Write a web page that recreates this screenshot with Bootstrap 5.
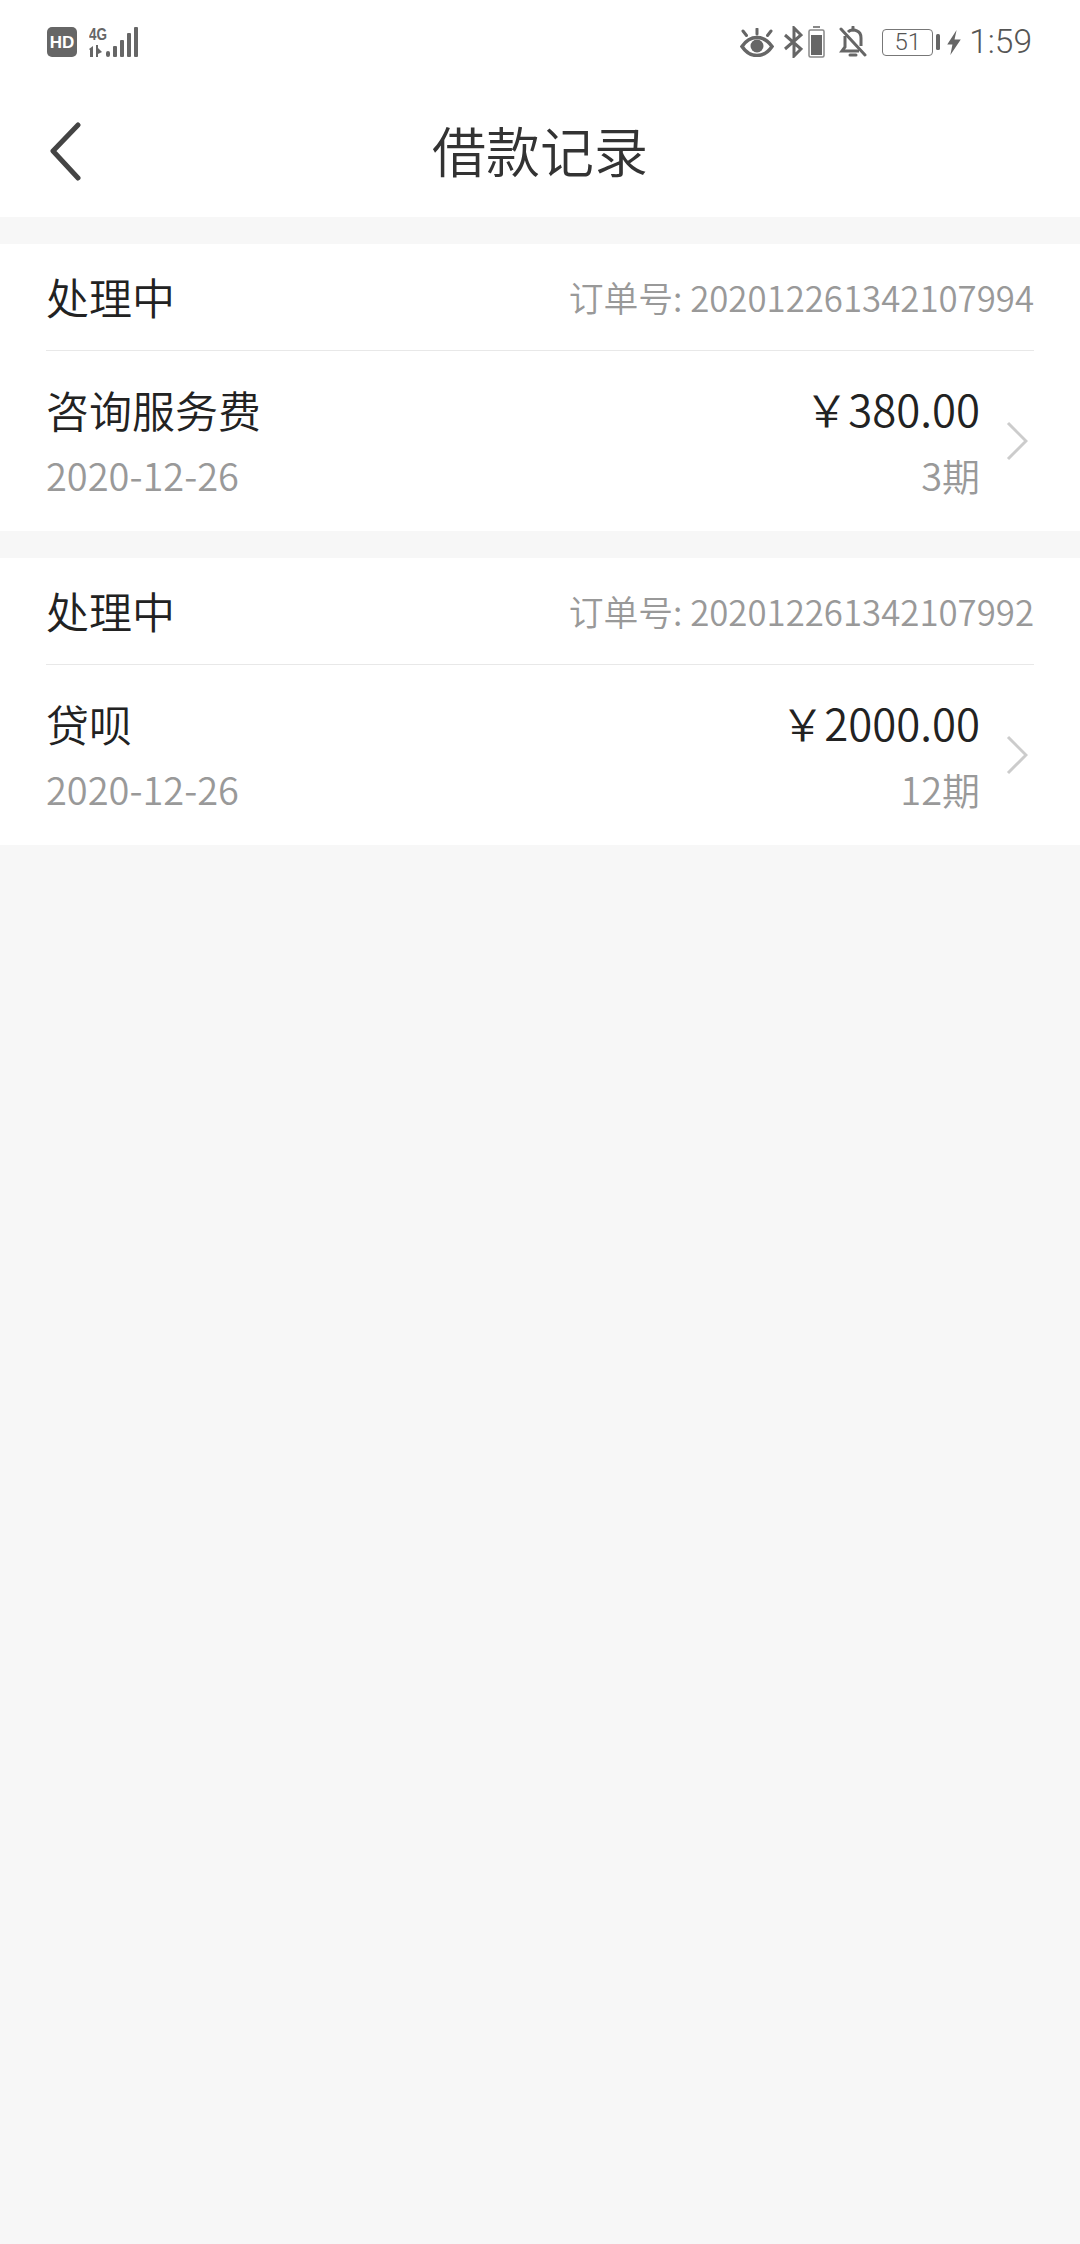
<!DOCTYPE html>
<html lang="zh-CN">
<head>
    <meta charset="UTF-8">
    <meta name="viewport" content="width=device-width, initial-scale=1.0">
    <title>借款记录</title>
    <link rel="stylesheet" href="https://cdn.jsdelivr.net/npm/bootstrap@5.3.0/dist/css/bootstrap.min.css">
    <style>
        body { background: #f7f7f7; font-family: "Noto Sans CJK SC", "Noto Sans", sans-serif; min-height: 2244px; }
        .status-bar { height: 82px; padding: 2px 48px 0 46px; color: #666; }
        .status-time { font-family: Roboto, sans-serif; font-size: 33.5px; font-weight: 300; line-height: 1; color: #555; margin-left: 8px; }
        .batt-box { width: 51px; height: 27px; border: 1.5px solid #777; border-radius: 4px; font-family: Roboto, sans-serif; font-size: 24px; font-weight: 300; line-height: 24px; text-align: center; color: #555; }
        .gap-eye { margin-right: 9px; }
        .gap-bt { margin-right: 5px; }
        .gap-batt { margin-right: 14px; }
        .gap-bell { margin-right: 15px; }
        .gap-box { margin: 0 7px 0 3px; }
        .title-bar { height: 135px; position: relative; }
        .back-btn { position: absolute; left: 48px; top: 39px; }
        .page-title { font-size: 54px; line-height: 1; color: #333; margin: 0; font-weight: 350; }
        .loan-block { margin-top: 27px; height: 287px; padding-left: 46px; }
        .loan-head { height: 107px; margin-right: 46px; border-bottom: 1.5px solid #e8e8e8; }
        .loan-state { font-size: 43px; line-height: 1; color: #222; font-weight: 350; margin-top: -2px; }
        .loan-no { font-size: 34.800px; line-height: 1; color: #999; font-weight: 350; }
        .loan-body { height: 180px; padding: 0 52px 1px 0; }
        .loan-name { font-size: 43px; line-height: 1; color: #222; margin-bottom: 25px; font-weight: 350; }
        .loan-amount { font-size: 43.700px; line-height: 1; color: #222; margin-bottom: 25px; font-weight: 350; }
        .loan-sub { font-size: 38px; line-height: 1; color: #999; font-weight: 350; }
        .row-arrow { margin-left: 26px; margin-top: 1px; }
    </style>
</head>
<body>

    <!-- status bar -->
    <div class="status-bar bg-white d-flex align-items-center justify-content-between">
        <div class="d-flex align-items-center">
            <svg class="me-2" width="31" height="30" viewBox="0 0 31 30"><rect x="1" width="30" height="30" rx="5" fill="#666"/><text x="16" y="21" text-anchor="middle" font-family="Liberation Sans" font-weight="700" font-size="17" fill="#fff">HD</text></svg>
            <svg class="ms-1" width="50" height="32" viewBox="0 0 50 32" fill="#666">
                <text x="0" y="14" font-family="Liberation Sans" font-weight="700" font-size="17" textLength="18" lengthAdjust="spacingAndGlyphs">4G</text>
                <path d="M0 23l4-3v11H1v-7zM7 19h2v12H7zM9 22l4 4-4 2z"/>
                <rect x="17" y="25" width="4" height="6" rx="2"/><rect x="24" y="20" width="4" height="11" rx="1"/><rect x="31" y="14" width="4" height="17" rx="1"/><rect x="38" y="7" width="4" height="24" rx="1"/><rect x="45" y="1" width="4" height="30" rx="1"/>
            </svg>
        </div>
        <div class="d-flex align-items-center">
            <svg class="gap-eye" width="34" height="29" viewBox="0 0 34 29" fill="none" stroke="#666" stroke-width="3.500">
                <path d="M2 18.500c4-6 9-9 15-9s11 3 15 9c-4 6-9 9-15 9s-11-3-15-9z"/>
                <circle cx="17" cy="18" r="6.500" fill="#666" stroke="none"/>
                <path d="M17 1v5M3 3l3.500 4.500M31 3l-3.500 4.500" stroke-width="3" stroke-linecap="round"/>
            </svg>
            <svg class="gap-bt" width="20" height="32" viewBox="0 0 20 32" fill="none" stroke="#666" stroke-width="3">
                <path d="M2 9l16 14-7 7V2l7 7L2 23"/>
            </svg>
            <svg class="gap-batt" width="17" height="32" viewBox="0 0 17 32" fill="none">
                <rect x="5" y="0" width="7" height="2" fill="#888"/>
                <rect x="1" y="4" width="15" height="27" rx="1.500" stroke="#888" stroke-width="1.500"/>
                <rect x="3" y="9" width="11" height="20" fill="#666"/>
            </svg>
            <svg class="gap-bell" width="28" height="32" viewBox="0 0 28 32" fill="none" stroke="#666" stroke-width="3">
                <path d="M6 10v11l-3 4h17M9 6c2-2 6-3 9-1 3 1 4 4 4 7v8"/>
                <path d="M14 1v3M11 29h6" stroke-linecap="round"/>
                <path d="M2 3l24 26" stroke-linecap="round"/>
            </svg>
            <div class="batt-box">51</div>
            <svg class="gap-box" width="4" height="16" viewBox="0 0 4 16"><rect width="4" height="16" rx="1.500" fill="#666"/></svg>
            <svg width="14" height="25" viewBox="0 0 13 24"><path d="M9 0L0 14h5l-2 10 10-15H7z" fill="#666"/></svg>
            <span class="status-time">1:59</span>
        </div>
    </div>

    <!-- titre -->
    <div class="title-bar bg-white d-flex align-items-center justify-content-center">
        <a class="back-btn" href="#">
            <svg width="34" height="60" viewBox="0 0 34 60" fill="none" stroke="#444" stroke-width="5" stroke-linecap="round" stroke-linejoin="round"><path d="M30 4L5 30l25 27"/></svg>
        </a>
        <h1 class="page-title">借款记录</h1>
    </div>

    <div id="loan-list"></div>

    <script>
        const loans = [
            { no: "202012261342107994", name: "咨询服务费", date: "2020-12-26", amount: "￥380.00", term: "3期" },
            { no: "202012261342107992", name: "贷呗", date: "2020-12-26", amount: "￥2000.00", term: "12期" }
        ];

        let list = document.getElementById("loan-list");
        loans.forEach(loan => {
            let div = document.createElement("div");
            div.className = "loan-block bg-white";
            div.innerHTML = `
                <div class="loan-head d-flex align-items-center justify-content-between">
                    <span class="loan-state">处理中</span>
                    <span class="loan-no">订单号: ${loan.no}</span>
                </div>
                <div class="loan-body d-flex align-items-center justify-content-between">
                    <div>
                        <div class="loan-name">${loan.name}</div>
                        <div class="loan-sub">${loan.date}</div>
                    </div>
                    <div class="d-flex align-items-center">
                        <div class="text-end">
                            <div class="loan-amount">${loan.amount}</div>
                            <div class="loan-sub">${loan.term}</div>
                        </div>
                        <svg class="row-arrow" width="22" height="40" viewBox="0 0 22 40" fill="none" stroke="#ccc" stroke-width="3"><path d="M2 2l18 18L2 38"/></svg>
                    </div>
                </div>`;
            list.appendChild(div);
        });
    </script>
    <script src="https://cdn.jsdelivr.net/npm/bootstrap@5.3.0/dist/js/bootstrap.bundle.min.js"></script>
</body>
</html>
